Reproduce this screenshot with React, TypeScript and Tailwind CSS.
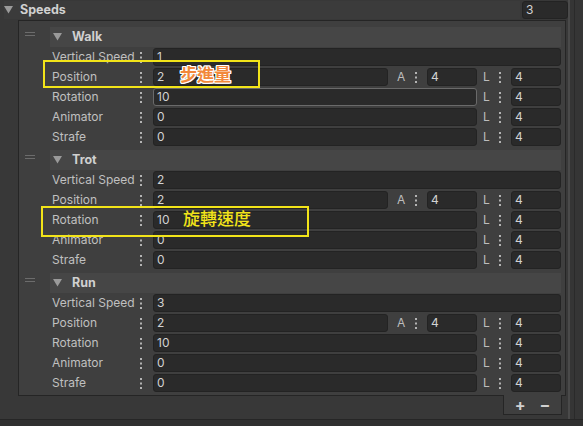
import React from 'react'

type Row = { label: string; value: string; kind: 'full' | 'pos' | 'l'; focus?: boolean }

const elements: { name: string; rows: Row[] }[] = [
  {
    name: 'Walk',
    rows: [
      { label: 'Vertical Speed', value: '1', kind: 'full' },
      { label: 'Position', value: '2', kind: 'pos' },
      { label: 'Rotation', value: '10', kind: 'l', focus: true },
      { label: 'Animator', value: '0', kind: 'l' },
      { label: 'Strafe', value: '0', kind: 'l' },
    ],
  },
  {
    name: 'Trot',
    rows: [
      { label: 'Vertical Speed', value: '2', kind: 'full' },
      { label: 'Position', value: '2', kind: 'pos' },
      { label: 'Rotation', value: '10', kind: 'l' },
      { label: 'Animator', value: '0', kind: 'l' },
      { label: 'Strafe', value: '0', kind: 'l' },
    ],
  },
  {
    name: 'Run',
    rows: [
      { label: 'Vertical Speed', value: '3', kind: 'full' },
      { label: 'Position', value: '2', kind: 'pos' },
      { label: 'Rotation', value: '10', kind: 'l' },
      { label: 'Animator', value: '0', kind: 'l' },
      { label: 'Strafe', value: '0', kind: 'l' },
    ],
  },
]

function Dots() {
  return (
    <svg width="2" height="11" viewBox="0 0 2 11" className="shrink-0">
      <rect x="0" y="0" width="2" height="2" fill="#b4b4b4" />
      <rect x="0" y="4.5" width="2" height="2" fill="#b4b4b4" />
      <rect x="0" y="9" width="2" height="2" fill="#b4b4b4" />
    </svg>
  )
}

function Triangle() {
  return (
    <svg width="9" height="8" viewBox="0 0 9 8" className="shrink-0">
      <path d="M0 0 H9 L4.5 7.5 Z" fill="#9a9a9a" />
    </svg>
  )
}

function Field({ value, focus, className = '' }: { value: string; focus?: boolean; className?: string }) {
  return (
    <div
      className={
        'h-[18px] rounded-[3px] bg-[#2a2a2a] border flex items-center pl-[3px] text-[#d2d2d2] ' +
        (focus ? 'border-[#6a6a6a] ' : 'border-[#232323] ') +
        className
      }
    >
      {value}
    </div>
  )
}

function Suffix({ letter, w, ml }: { letter: string; w: string; ml: string }) {
  return (
    <div className={'flex items-center shrink-0 ' + w}>
      <span className={'text-[#bdbdbd] ' + ml}>{letter}</span>
      <div className="flex-1 flex justify-center">
        <Dots />
      </div>
    </div>
  )
}

function PropRow({ row }: { row: Row }) {
  return (
    <div className="h-[20px] flex items-center">
      <span className="w-[85px] pl-[2px] text-[#c0c0c0] whitespace-nowrap">{row.label}</span>
      <div className="w-[12px] flex justify-center">
        <Dots />
      </div>
      <div className="w-[6px]" />
      <Field value={row.value} focus={row.focus} className="flex-1" />
      {row.kind === 'pos' && (
        <>
          <Suffix letter="A" w="w-[39px]" ml="ml-[9px]" />
          <Field value="4" className="w-[50px]" />
        </>
      )}
      {row.kind !== 'full' && (
        <>
          <Suffix letter="L" w="w-[34px]" ml="ml-[6px]" />
          <Field value="4" className="w-[50px]" />
        </>
      )}
    </div>
  )
}

export default function App() {
  return (
    <div
      className="w-[583px] h-[426px] bg-[#303030] relative overflow-hidden text-[12px] leading-none"
      style={{ fontFamily: 'Inter, "Noto Sans", sans-serif' }}
    >
      <div className="flex h-[420px] border-b border-[#262626]">
        <div className="w-[570px] bg-[#383838] border-r-[2px] border-[#4a4a4a] flex flex-col">
          {/* Speeds header */}
          <div className="h-[20px] flex items-center">
            <div className="ml-[4px] flex-1 h-[18px] flex items-center bg-[#3b3b3b]">
              <Triangle />
              <span className="ml-[7px] font-bold text-[#d0d0d0] text-[12.5px]">Speeds</span>
            </div>
            <Field value="3" className="w-[46px] -mt-[1px] ml-[2px]" />
          </div>

          {/* list */}
          <div className="ml-[18px] w-[548px] h-[376px] border border-[#252525] bg-[#3f3f3f] pt-[6px] flex flex-col gap-[3px]">
            {elements.map((el) => (
              <div key={el.name} className="flex">
                <div className="w-[31px] pt-[5px] pl-[6px] flex flex-col gap-[2px]">
                  <div className="w-[10px] h-[1px] bg-[#6c6c6c]" />
                  <div className="w-[10px] h-[1px] bg-[#6c6c6c]" />
                </div>
                <div className="w-[511px] flex flex-col">
                  <div className="h-[20px] bg-[#464646] flex items-center pl-[3px]">
                    <Triangle />
                    <span className="ml-[10px] font-bold text-[#d0d0d0] text-[12.5px]">{el.name}</span>
                  </div>
                  {el.rows.map((r) => (
                    <PropRow key={r.label} row={r} />
                  ))}
                </div>
              </div>
            ))}
          </div>

          {/* footer */}
          <div className="ml-[503px] -mt-[1px] w-[59px] h-[20px] border border-t-0 border-[#252525] bg-[#3f3f3f] flex items-center justify-center gap-[14px] text-[#d0d0d0] font-bold">
            <span className="text-[16px]">+</span>
            <span className="text-[16px]">−</span>
          </div>
        </div>
        <div className="flex-1 bg-[#353535] flex">
          <div className="w-[4px]" />
          <div className="w-[1px] bg-[#2a2a2a]" />
        </div>
      </div>

      {/* annotations */}
      <div className="absolute left-[43px] top-[60px] w-[217px] h-[28px] border-[2px] border-[#f2e419]" />
      <span
        className="absolute left-[180px] top-[65px] text-[17px] font-bold text-[#f2883a]"
        style={{
          fontFamily: '"Noto Sans CJK TC", sans-serif',
          textShadow:
            '1px 0 #fff, -1px 0 #fff, 0 1px #fff, 0 -1px #fff, 1px 1px #fff, -1px -1px #fff, 1px -1px #fff, -1px 1px #fff',
        }}
      >
        步進量
      </span>
      <div className="absolute left-[41px] top-[206px] w-[268px] h-[31px] border-[2px] border-[#f2e419]" />
      <span
        className="absolute left-[183px] top-[209px] text-[17px] font-medium text-[#f2e419]"
        style={{ fontFamily: '"Noto Sans CJK TC", sans-serif' }}
      >
        旋轉速度
      </span>
    </div>
  )
}
